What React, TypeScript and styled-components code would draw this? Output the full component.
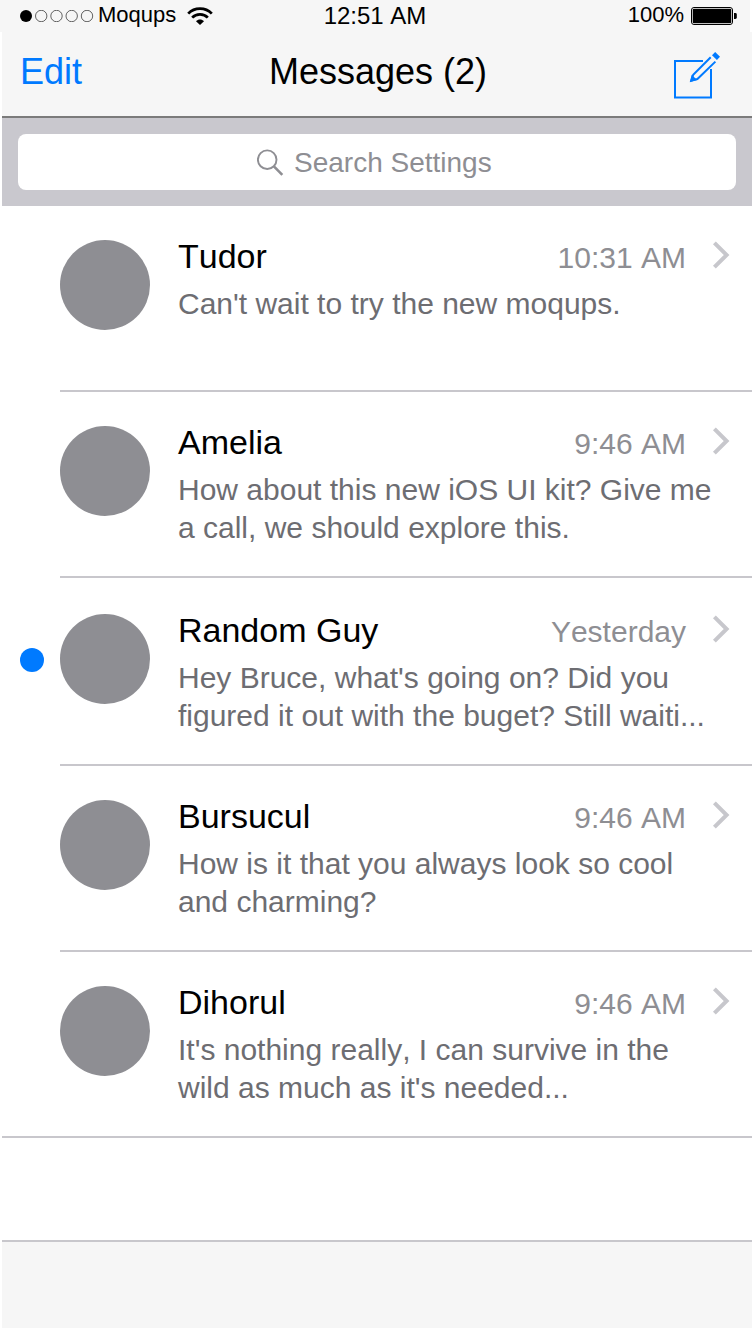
import React from 'react';
import styled, { createGlobalStyle } from 'styled-components';

const GlobalStyle = createGlobalStyle`
  *, *::before, *::after { box-sizing: border-box; }
  body {
    margin: 0;
    background: #fff;
    color: #000;
    font-family: 'Liberation Sans', Arial, sans-serif;
    font-kerning: none;
  }
`;

const Screen = styled.div`
  display: flex;
  flex-direction: column;
  min-height: 100vh;
`;

const StatusBar = styled.header`
  display: grid;
  grid-template-columns: 1fr auto 1fr;
  align-items: center;
  height: 32px;
  margin-right: 2px;
  padding: 0 13px 0 20px;
  background: #f6f6f6;
  font-size: 22px;
  line-height: 28px;
`;

const StatusGroup = styled.div<{ $end?: boolean }>`
  display: flex;
  align-items: center;
  justify-content: ${(p) => (p.$end ? 'flex-end' : 'flex-start')};
  gap: ${(p) => (p.$end ? 7 : 4)}px;
`;

const StatusText = styled.span`
  padding-bottom: 2px;
`;

const Carrier = styled(StatusText)`
  margin-right: 7px;
`;

const Clock = styled.time`
  padding-right: 7px;
  font-size: 24px;
`;

const Content = styled.div`
  display: flex;
  flex: 1;
  flex-direction: column;
  margin-left: 2px;
`;

const NavBar = styled.nav`
  display: grid;
  grid-template-columns: 1fr auto 1fr;
  align-items: center;
  height: 86px;
  padding: 0 32px 4px 18px;
  border-bottom: 2px solid #7b7b7b;
  background: #f6f6f6;
  font-size: 36px;
  line-height: 40px;
`;

const NavButton = styled.button<{ $end?: boolean }>`
  display: flex;
  justify-self: ${(p) => (p.$end ? 'end' : 'start')};
  padding: ${(p) => (p.$end ? 7 : 0)}px 0 0;
  border: 0;
  background: none;
  color: #007aff;
  font: inherit;
  cursor: pointer;
`;

const Title = styled.h1`
  margin: 0;
  padding-left: 16px;
  font-size: 36px;
  font-weight: 400;
`;

const SearchBar = styled.div`
  padding: 16px;
  background: #c9c8ce;
`;

const SearchField = styled.label`
  display: flex;
  align-items: center;
  justify-content: center;
  gap: 9px;
  height: 56px;
  padding-top: 2px;
  border-radius: 8px;
  background: #fff;
  color: #8e8e93;
`;

const SearchInput = styled.input`
  width: 203px;
  height: 54px;
  padding: 0;
  border: 0;
  outline: 0;
  background: transparent;
  color: #000;
  font: inherit;
  font-size: 28px;
  font-kerning: none;
  &::placeholder { color: #8e8e93; opacity: 1; }
`;

const MessageList = styled.ul`
  margin: 0;
  padding: 0;
  list-style: none;
`;

const MessageItem = styled.li<{ $unread?: boolean }>`
  display: flex;
  min-height: ${(p) => (p.$unread ? 188 : 186)}px;
  &:not(:last-child) > a { border-bottom: 2px solid #c8c7cc; }
  &:last-child { border-bottom: 2px solid #c8c7cc; }
`;

const Gutter = styled.div`
  flex: none;
  width: 58px;
  padding: 70px 0 0 18px;
`;

const UnreadDot = styled.span`
  display: block;
  width: 24px;
  height: 24px;
  border-radius: 50%;
  background: #007aff;
`;

const MessageLink = styled.a<{ $unread?: boolean }>`
  display: flex;
  flex: 1;
  gap: 28px;
  min-width: 0;
  padding: ${(p) => (p.$unread ? 34 : 32)}px 22px 0 0;
  color: inherit;
  text-decoration: none;
`;

const Avatar = styled.span`
  flex: none;
  width: 90px;
  height: 90px;
  margin-top: 2px;
  border-radius: 50%;
  background: #8e8e93;
`;

const Body = styled.div`
  flex: 1;
  min-width: 0;
`;

const Heading = styled.div`
  display: flex;
  align-items: baseline;
  margin-bottom: 9px;
  line-height: 36px;
`;

const Name = styled.h2`
  flex: 1;
  margin: 0;
  font-size: 34px;
  font-weight: 400;
`;

const Time = styled.time`
  color: #8e8e93;
  font-size: 30px;
`;

const Chevron = styled.svg`
  align-self: flex-start;
  margin: 3px 0 0 26px;
`;

const Preview = styled.p`
  margin: 0;
  padding-right: 14px;
  color: #6d6d72;
  font-size: 30px;
  line-height: 38px;
`;

const Spacer = styled.div`
  flex: 1;
  min-height: 102px;
`;

const Toolbar = styled.footer`
  height: 88px;
  border-top: 2px solid #c8c7cc;
  background: #f6f6f6;
`;

interface Message {
  name: string;
  time: string;
  text: string;
  unread?: boolean;
}

const messages: Message[] = [
  { name: 'Tudor', time: '10:31 AM', text: "Can't wait to try the new moqups." },
  {
    name: 'Amelia',
    time: '9:46 AM',
    text: 'How about this new iOS UI kit? Give me a call, we should explore this.',
  },
  {
    name: 'Random Guy',
    time: 'Yesterday',
    text: "Hey Bruce, what's going on? Did you figured it out with the buget? Still waiti...",
    unread: true,
  },
  {
    name: 'Bursucul',
    time: '9:46 AM',
    text: 'How is it that you always look so cool and charming?',
  },
  {
    name: 'Dihorul',
    time: '9:46 AM',
    text: "It's nothing really, I can survive in the wild as much as it's needed...",
  },
];

const SignalIcon = () => (
  <svg width="74" height="12" viewBox="0 0 74 12" aria-hidden="true">
    <circle cx="6" cy="6" r="6" />
    {[21.2, 36.5, 51.7, 67].map((cx) => (
      <circle key={cx} cx={cx} cy="6" r="5.7" fill="none" stroke="#000" strokeWidth="0.6" />
    ))}
  </svg>
);

const WifiIcon = () => (
  <svg width="26" height="18" viewBox="0 0 26 18" aria-hidden="true">
    <g fill="none" stroke="#000" strokeWidth="2.8">
      <path d="M1.2 6.6C7.6-.1 18.4-.1 24.8 6.6" />
      <path d="M5.2 10.6C9.4 6.2 16.6 6.2 20.8 10.6" />
    </g>
    <path d="M13 18 9 14.2C11.2 11.9 14.8 11.9 17 14.2Z" />
  </svg>
);

const BatteryIcon = () => (
  <svg width="46" height="18" viewBox="0 0 46 18" aria-hidden="true">
    <rect x="0.5" y="0.5" width="41" height="17" rx="2.5" fill="#fff" stroke="#000" />
    <rect x="1.7" y="1.7" width="38.6" height="14.6" rx="1.4" />
    <path d="M43 6h1.4q1.4 0 1.4 1.4v3.2q0 1.4-1.4 1.4H43z" />
  </svg>
);

const ComposeIcon = () => (
  <svg width="46" height="47" viewBox="0 0 46 47" fill="none" stroke="currentColor" aria-hidden="true">
    <path d="M29 9H1V45.5H37V17" strokeWidth="2" />
    <path d="M36.7 5.2 19.2 22.7 17.3 28.6 23.4 27 41.4 9.6" strokeWidth="2" />
    <path d="m15.8 30.2 1.9-7.4 5.4 5.1z" fill="currentColor" stroke="none" />
    <path d="m39.6 1.7 4.9 4.7" strokeWidth="4.6" />
  </svg>
);

const SearchIcon = () => (
  <svg width="28" height="28" viewBox="0 0 28 28" fill="none" stroke="currentColor" aria-hidden="true">
    <circle cx="10.2" cy="10.7" r="9.3" strokeWidth="1.9" />
    <path d="m16.9 17.4 8.4 8.4" strokeWidth="2.6" />
  </svg>
);

export default function App() {
  return (
    <>
      <GlobalStyle />
      <Screen>
        <StatusBar>
          <StatusGroup>
            <SignalIcon />
            <Carrier>Moqups</Carrier>
            <WifiIcon />
          </StatusGroup>
          <Clock>12:51 AM</Clock>
          <StatusGroup $end>
            <StatusText>100%</StatusText>
            <BatteryIcon />
          </StatusGroup>
        </StatusBar>
        <Content>
          <NavBar>
            <NavButton type="button">Edit</NavButton>
            <Title>Messages (2)</Title>
            <NavButton type="button" $end aria-label="New message">
              <ComposeIcon />
            </NavButton>
          </NavBar>
          <SearchBar>
            <SearchField>
              <SearchIcon />
              <SearchInput type="text" placeholder="Search Settings" aria-label="Search Settings" />
            </SearchField>
          </SearchBar>
          <MessageList>
            {messages.map((m) => (
              <MessageItem key={m.name} $unread={m.unread}>
                <Gutter>{m.unread && <UnreadDot />}</Gutter>
                <MessageLink href="#" $unread={m.unread}>
                  <Avatar />
                  <Body>
                    <Heading>
                      <Name>{m.name}</Name>
                      <Time>{m.time}</Time>
                      <Chevron width="18" height="28" viewBox="0 0 18 28" fill="none" stroke="#c7c7cc" strokeWidth="4" aria-hidden="true">
                        <path d="m2.4 1.8 12.2 12.2L2.4 26.2" />
                      </Chevron>
                    </Heading>
                    <Preview>{m.text}</Preview>
                  </Body>
                </MessageLink>
              </MessageItem>
            ))}
          </MessageList>
          <Spacer />
          <Toolbar />
        </Content>
      </Screen>
    </>
  );
}
